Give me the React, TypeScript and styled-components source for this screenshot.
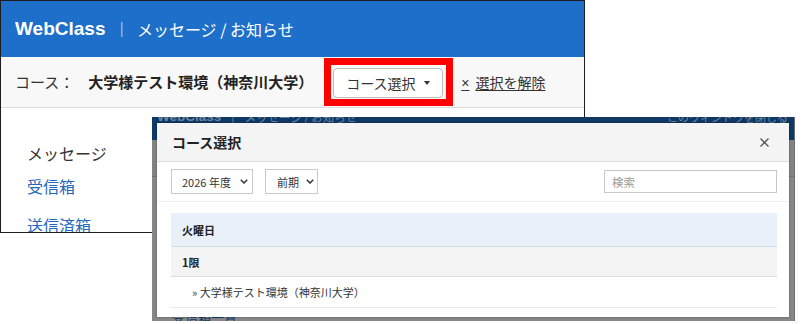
import React from "react";
import styled, { createGlobalStyle } from "styled-components";

const GlobalStyle = createGlobalStyle`
  html, body { margin: 0; padding: 0; background: #fff; }
  body { font-family: "Noto Sans CJK JP", "Noto Sans", sans-serif; color: #333; }
  * { box-sizing: border-box; }
`;

const Canvas = styled.div`
  position: relative;
  width: 801px;
  height: 324px;
  overflow: hidden;
  background: #fff;
`;

/* ---------- Screenshot 1 ---------- */
const Shot = styled.div`
  width: 585px;
  height: 233px;
  border: 1px solid #1c1c1c;
  background: #fff;
  overflow: hidden;
  display: flex;
  flex-direction: column;
`;

const TopBar = styled.header`
  height: 56px;
  flex: none;
  background: #1e6fc9;
  display: flex;
  align-items: center;
  padding-left: 14px;
  color: #fff;
`;

const Brand = styled.span`
  font-family: "Liberation Sans", Arial, sans-serif;
  font-weight: 700;
  font-size: 19px;
  line-height: 22px;
`;

const Divider = styled.span`
  margin: 0 13px 0 14px;
  font-family: "Liberation Sans", Arial, sans-serif;
  font-size: 17px;
  line-height: 22px;
  color: rgba(255, 255, 255, 0.5);
`;

const PageTitle = styled.span`
  font-size: 16px;
  line-height: 22px;
`;

const CourseBar = styled.div`
  height: 51px;
  flex: none;
  background: #f8f8f8;
  border-bottom: 1px solid #dcdcdc;
  display: flex;
  align-items: center;
  padding-left: 14px;
  font-size: 15px;
  line-height: 20px;
`;

const Label = styled.span`
  color: #333;
`;

const CourseName = styled.span`
  margin-left: 14px;
  font-weight: 700;
  color: #222;
`;

const Highlight = styled.span`
  margin-left: 11px;
  display: inline-flex;
  border: 7px solid #ff0000;
  padding: 3px 3px 1px 2px;
`;

const SelectButton = styled.button`
  width: 110px;
  height: 30px;
  display: flex;
  align-items: center;
  padding: 0 0 0 12px;
  background: #fff;
  border: 1px solid #bdbdbd;
  border-radius: 4px;
  font-family: inherit;
  font-size: 14px;
  color: #333;
  gap: 8px;
`;

const ClearLink = styled.a`
  margin-left: 8px;
  font-size: 14px;
  color: #333;
  text-decoration: underline;
  text-underline-offset: 2px;
`;

const Times = styled.span`
  font-family: "Liberation Sans", Arial, sans-serif;
  margin-right: 6px;
`;

const SideNav = styled.nav`
  padding: 33px 0 0 26px;
  display: flex;
  flex-direction: column;
`;

const NavHeading = styled.div`
  font-size: 16px;
  line-height: 24px;
  color: #333;
`;

const NavLink = styled.a<{ $gap: number }>`
  margin-top: ${(p) => p.$gap}px;
  font-size: 16px;
  line-height: 24px;
  color: #2467be;
  text-decoration: none;
`;

/* ---------- Screenshot 2 (dimmed page + modal) ---------- */
const Shot2 = styled.div`
  position: absolute;
  left: 152px;
  top: 117px;
  width: 643px;
  height: 204px;
  background: #878787;
  overflow: hidden;
  display: flex;
  flex-direction: column;
  border-right: 1px solid #6f6f6f;
`;

const DimBar = styled.div`
  height: 23px;
  flex: none;
  background: #0f3865;
  display: flex;
  align-items: flex-start;
  justify-content: space-between;
  padding: 0 6px 0 5px;
  overflow: hidden;
  color: rgba(255, 255, 255, 0.4);
`;

const DimTitle = styled.div`
  margin-top: -8px;
  display: flex;
  align-items: center;
  gap: 10px;
  line-height: 16px;
`;

const DimBrand = styled.span`
  font-family: "Liberation Sans", Arial, sans-serif;
  font-weight: 700;
  font-size: 13.5px;
`;

const DimText = styled.span`
  font-size: 11.5px;
`;

const DimClose = styled.span`
  margin-top: -8px;
  line-height: 16px;
  font-size: 11px;
  text-decoration: underline;
`;

const DimSub = styled.div`
  height: 37px;
  flex: none;
  background: #838383;
  border-bottom: 1px solid #727272;
`;

const DimBody = styled.div`
  padding: 132px 0 0 20px;
  font-size: 13px;
  line-height: 16px;
  color: #163a6b;
`;

const Modal = styled.div`
  position: absolute;
  left: 5px;
  top: 6px;
  width: 632px;
  height: 194px;
  background: #fff;
  display: flex;
  flex-direction: column;
  box-shadow: 0 0 2px rgba(0, 0, 0, 0.35);
`;

const ModalHeader = styled.div`
  height: 39px;
  flex: none;
  background: #f4f4f4;
  border-bottom: 1px solid #dedede;
  display: flex;
  align-items: center;
  justify-content: space-between;
  padding: 0 20px 0 15px;
`;

const ModalTitle = styled.h2`
  margin: 0;
  font-size: 14px;
  font-weight: 700;
  line-height: 20px;
  color: #222;
`;

const CloseButton = styled.button`
  width: 10px;
  height: 10px;
  padding: 0;
  border: 0;
  background: none;
  display: flex;
  align-items: center;
  justify-content: center;
`;

const FilterRow = styled.div`
  height: 40px;
  flex: none;
  border-bottom: 1px solid #eeeeee;
  display: flex;
  align-items: center;
  padding: 0 12px 0 14px;
  gap: 12px;
`;

const Picker = styled.button<{ $w: number; $pl: number; $pr: number }>`
  width: ${(p) => p.$w}px;
  height: 25px;
  display: flex;
  align-items: center;
  justify-content: space-between;
  padding: 0 ${(p) => p.$pr}px 0 ${(p) => p.$pl}px;
  background: #fff;
  border: 1px solid #cacaca;
  font-family: inherit;
  font-size: 11px;
  color: #333;
`;

const Search = styled.input`
  margin-left: auto;
  width: 173px;
  height: 23px;
  border: 1px solid #c8c8c8;
  padding: 0 0 0 7px;
  font-family: inherit;
  font-size: 11.5px;
  color: #333;
  outline: none;
  &::placeholder {
    color: #9a9a9a;
  }
`;

const Table = styled.div`
  margin: 11px 12px 0 14px;
  display: flex;
  flex-direction: column;
`;

const Row = styled.div<{ $h: number; $bg: string; $line: string; $pl: number; $bold?: boolean }>`
  height: ${(p) => p.$h}px;
  background: ${(p) => p.$bg};
  border-bottom: 1px solid ${(p) => p.$line};
  display: flex;
  align-items: center;
  padding-left: ${(p) => p.$pl}px;
  font-size: 11px;
  line-height: 16px;
  font-weight: ${(p) => (p.$bold ? 700 : 400)};
  color: ${(p) => (p.$bold ? "#222" : "#333")};
`;

const Chevron = () => (
  <svg width="8" height="5" viewBox="0 0 8 5" aria-hidden>
    <path d="M0.8 0.8 L4 4 L7.2 0.8" fill="none" stroke="#333" strokeWidth="1.5" />
  </svg>
);

const Caret = () => (
  <svg width="6" height="4" viewBox="0 0 6 4" aria-hidden>
    <path d="M0 0 H6 L3 4 Z" fill="#333" />
  </svg>
);

const CloseIcon = () => (
  <svg width="9" height="9" viewBox="0 0 9 9" aria-hidden>
    <path d="M0.5 0.5 L8.5 8.5 M8.5 0.5 L0.5 8.5" stroke="#555" strokeWidth="1.3" />
  </svg>
);

export default function App() {
  return (
    <>
      <GlobalStyle />
      <Canvas>
        <Shot>
          <TopBar>
            <Brand>WebClass</Brand>
            <Divider>|</Divider>
            <PageTitle>メッセージ / お知らせ</PageTitle>
          </TopBar>
          <CourseBar>
            <Label>コース：</Label>
            <CourseName>大学様テスト環境（神奈川大学）</CourseName>
            <Highlight>
              <SelectButton>
                コース選択
                <Caret />
              </SelectButton>
            </Highlight>
            <ClearLink>
              <Times>×</Times>選択を解除
            </ClearLink>
          </CourseBar>
          <SideNav>
            <NavHeading>メッセージ</NavHeading>
            <NavLink $gap={9}>受信箱</NavLink>
            <NavLink $gap={15}>送信済箱</NavLink>
          </SideNav>
        </Shot>

        <Shot2>
          <DimBar>
            <DimTitle>
              <DimBrand>WebClass</DimBrand>
              <DimText>|</DimText>
              <DimText>メッセージ / お知らせ</DimText>
            </DimTitle>
            <DimClose>このウィンドウを閉じる</DimClose>
          </DimBar>
          <DimSub />
          <DimBody>受信箱一覧</DimBody>

          <Modal>
            <ModalHeader>
              <ModalTitle>コース選択</ModalTitle>
              <CloseButton aria-label="閉じる">
                <CloseIcon />
              </CloseButton>
            </ModalHeader>
            <FilterRow>
              <Picker $w={82} $pl={10} $pr={4}>
                2026 年度
                <Chevron />
              </Picker>
              <Picker $w={53} $pl={11} $pr={3}>
                前期
                <Chevron />
              </Picker>
              <Search placeholder="検索" />
            </FilterRow>
            <Table>
              <Row $h={34} $bg="#e8f0f9" $line="#d3dbe4" $pl={11} $bold>
                火曜日
              </Row>
              <Row $h={30} $bg="#f4f4f4" $line="#dddddd" $pl={11} $bold>
                1限
              </Row>
              <Row $h={31} $bg="#ffffff" $line="#e8e8e8" $pl={21}>
                » 大学様テスト環境（神奈川大学）
              </Row>
            </Table>
          </Modal>
        </Shot2>
      </Canvas>
    </>
  );
}
